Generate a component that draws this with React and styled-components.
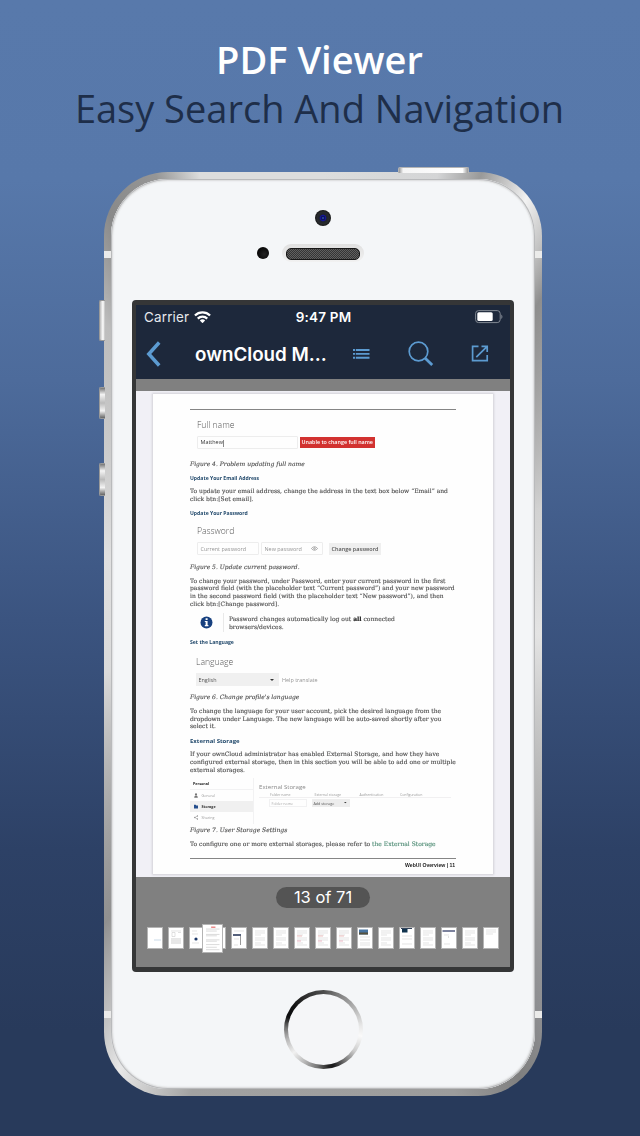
import React from "react";
import styled, { createGlobalStyle, css } from "styled-components";

const Global = createGlobalStyle`
  * { box-sizing: border-box; }
  body { margin: 0; }
`;

const sans = `"Open Sans", "Noto Sans", sans-serif`;
const serif = `"DejaVu Serif", "Liberation Serif", serif`;
const system = `Inter, "Liberation Sans", sans-serif`;

const Stage = styled.main`
  width: 640px;
  height: 1136px;
  overflow: hidden;
  padding-top: 35px;
  background: linear-gradient(180deg, #5879ab 0, #5778aa 180px, #4d6b9b 380px, #3b5480 620px, #2d4166 850px, #283a5b 1030px, #283a5b 100%);
  font-family: ${sans};
`;
const Heading = styled.header`
  height: 137px;
  padding-right: 1px;
  text-align: center;
  white-space: nowrap;
`;
const Title = styled.h1`
  margin: 0;
  font-size: 38px;
  line-height: 49px;
  font-weight: 600;
  color: #fff;
`;
const Subtitle = styled.p`
  margin: 0;
  font-size: 38px;
  line-height: 49px;
  color: #1e2e49;
`;

/* Device */
const Phone = styled.section`
  position: relative;
  width: 438px;
  height: 924px;
  margin-left: 104px;
  padding: 7px;
  border-radius: 64px;
  background: conic-gradient(from 0deg, #dcdddd 0deg, #d4d5d6 14deg, #999 19deg, #f2f2f2 25deg, #c4c4c4 29deg, #8e8e8e 33deg, #d2d2d2 60deg, #e4e4e4 90deg, #b0b0b0 130deg, #8e8f92 150deg, #7f7f7f 156deg, #9c9c9c 164deg, #a2a2a2 196deg, #e8e8e8 205deg, #c4c4c4 209deg, #909090 217deg, #dadada 260deg, #e0e0e0 290deg, #bdbdbd 325deg, #898989 333deg, #969696 340deg, #dcdddd 345deg, #dcdddd 360deg);
`;
const SideButton = styled.i`
  position: absolute;
  left: -5px;
  top: ${(p) => p.$top}px;
  width: 6px;
  height: ${(p) => p.$h}px;
  border: 1px solid #999;
  border-right: 0;
  border-radius: 2px 0 0 2px;
  background: ${(p) => p.$round
    ? "linear-gradient(180deg, #777, #f4f4f4 22%, #bbb 50%, #f4f4f4 76%, #666)"
    : "linear-gradient(90deg, #bbb, #fff 60%, #bbb)"};
`;
const PowerButton = styled.i`
  position: absolute;
  left: 294px;
  top: -5px;
  width: 71px;
  height: 6px;
  border: 1px solid #b4b4b4;
  border-bottom: 0;
  border-radius: 2px 2px 0 0;
  background: linear-gradient(90deg, #999, #f5f5f5 6%, #fff 92%, #999);
`;
const Antenna = styled.i`
  position: absolute;
  ${(p) => p.$side}: 0;
  top: ${(p) => p.$top}px;
  width: 7px;
  height: 7px;
  background: #ebebea;
`;
const Face = styled.div`
  height: 910px;
  display: flex;
  flex-direction: column;
  align-items: center;
  border-radius: 57px;
  background: #f4f6f8;
  box-shadow: inset 0 0 0 1px #b9babc, inset 0 0 0 2px #e0e1e2, inset 0 0 2px 2px #dcdedf;
`;
const Camera = styled.div`
  width: 16px;
  height: 16px;
  margin-top: 31px;
  border-radius: 50%;
  background: radial-gradient(circle, #3a5cc0 0, #080c50 1.8px, #1515a0 2.6px, #20242c 3.8px, #292b2e 6px, #151617 8px);
`;
const EarRow = styled.div`
  align-self: flex-start;
  display: flex;
  align-items: center;
  gap: 13px;
  height: 18px;
  margin: 18px 0 38px 146px;
`;
const Proximity = styled.i`
  width: 12px;
  height: 12px;
  border-radius: 50%;
  background: radial-gradient(circle at 60% 60%, #242424, #070707 70%);
`;
const Speaker = styled.div`
  width: 82px;
  height: 18px;
  padding: 4px;
  border-radius: 9px;
  background: linear-gradient(#e0e0e0, #ececec 70%, #f1f1f1);
  &::before {
    content: "";
    display: block;
    height: 10px;
    border: 1px solid #171717;
    border-radius: 5px;
    background: repeating-conic-gradient(#353535 0 25%, #606060 0 50%) 0 0 / 2px 2px;
  }
`;
const Home = styled.div`
  width: 79px;
  height: 79px;
  margin-top: 18px;
  padding: 4px;
  border-radius: 50%;
  background: conic-gradient(#4c4c4c 0deg, #777 20deg, #aaa 50deg, #e9e9e9 85deg, #fafafa 100deg, #ccc 125deg, #777 145deg, #19191b 165deg, #222 172deg, #777 190deg, #bcbcbc 212deg, #f1f1f1 232deg, #b8b8b8 255deg, #777 272deg, #0d0d0f 290deg, #111 308deg, #333 335deg, #4c4c4c 360deg);
  &::before {
    content: "";
    display: block;
    height: 100%;
    border-radius: 50%;
    background: #f5f6f8;
  }
`;

/* App screen */
const Screen = styled.div`
  flex: none;
  width: 382px;
  height: 672px;
  display: flex;
  flex-direction: column;
  border: 4px solid #353637;
  border-top-width: 5px;
  border-bottom-width: 5px;
  border-radius: 4px;
  background: #808080;
  font-family: ${system};
`;
const StatusBar = styled.div`
  height: 24px;
  flex: none;
  display: grid;
  grid-template-columns: 1fr auto 1fr;
  align-items: center;
  padding: 0 7px 0 8px;
  background: #1d283b;
  color: #fff;
  font-size: 13.4px;
  letter-spacing: 0.2px;
`;
const Carrier = styled.div`
  display: flex;
  align-items: center;
  gap: 5px;
  color: #e6e9ed;
`;
const Clock = styled.b`
  font-weight: 600;
  font-size: 13.5px;
`;
const BatterySlot = styled.div`
  display: flex;
  justify-content: flex-end;
`;
const NavBar = styled.nav`
  height: 50px;
  flex: none;
  display: flex;
  align-items: center;
  padding-left: 10px;
  background: #1d283b;
  color: #5c9bd1;
  svg { display: block; flex: none; }
`;
const DocTitle = styled.h2`
  width: 133px;
  margin: 0 25px 0 34px;
  color: #fff;
  font-size: 18.8px;
  font-weight: 600;
  white-space: nowrap;
`;
const NavGap = styled.i`
  width: ${(p) => p.$w}px;
`;
const Viewer = styled.div`
  height: 486px;
  flex: none;
  margin-top: 12px;
  padding: 3px 17px 0;
  background: #f1f0f6;
`;
const Page = styled.article`
  height: 480px;
  padding: 15px 37px 0;
  background: #fff;
  box-shadow: 0 0 2px 1px #d3d2d8;
  color: #4b4b4b;
  font-family: ${serif};
  white-space: nowrap;
  will-change: opacity;
  opacity: 0.999;
`;
const Rule = styled.hr`
  height: 1px;
  margin: ${(p) => p.$mt || 0}px 0 0;
  border: 0;
  background: #858585;
`;
const Para = styled.p`
  margin: ${(p) => p.$mt}px 0 0;
  font-size: 6px;
  line-height: 7.7px;
  -webkit-text-stroke: 0.12px currentColor;
  b { color: #222; }
  ${(p) => p.$caption && css`font-style: italic;`}
`;
const Link = styled.span`color: #4c8a72;`;
const SubHead = styled.h3`
  margin: ${(p) => p.$mt}px 0 0;
  font: 700 ${(p) => (p.$large ? 6 : 5.12)}px/8px ${sans};
  color: #234a6c;
`;
const FormTitle = styled.h4`
  margin: ${(p) => p.$mt}px 0 0 ${(p) => p.$ml || 7}px;
  font: 300 8.6px/12px ${sans};
  color: #555;
`;
const FormRow = styled.div`
  height: 13px;
  display: flex;
  align-items: center;
  margin: 5px 0 0 ${(p) => p.$ml || 7}px;
  font: 400 5.45px/8px ${sans};
  color: #949494;
`;
const Field = styled.div`
  width: ${(p) => p.$w}px;
  height: 13px;
  display: flex;
  align-items: center;
  justify-content: space-between;
  margin-right: 2px;
  padding: 0 4px 0 2.5px;
  border: 1px solid #ededed;
  border-radius: 1px;
  ${(p) => p.$filled && css`color: #333;`}
`;
const Caret = styled.i`
  display: inline-block;
  width: 1px;
  height: 7px;
  vertical-align: middle;
  background: #888;
`;
const ErrorTag = styled.div`
  height: 11px;
  width: 75px;
  padding: 0 1.5px;
  background: #d23230;
  color: #fff;
  font-weight: 600;
  font-size: 5.4px;
  line-height: 11px;
`;
const GreyButton = styled.div`
  width: 52px;
  height: 12px;
  margin-left: 4px;
  background: #efefef;
  color: #555;
  font-weight: 600;
  font-size: 5.5px;
  line-height: 12px;
  text-align: center;
`;
const Select = styled.div`
  width: 83px;
  height: 13px;
  display: flex;
  align-items: center;
  justify-content: space-between;
  margin-right: 3px;
  padding: 0 5px 0 2.5px;
  background: #f0f0f0;
  color: #555;
`;
const Note = styled.aside`
  height: 19px;
  display: flex;
  align-items: center;
  margin-top: 5.6px;
`;
const NoteIcon = styled.div`
  width: 34px;
  height: 19px;
  padding: 3px 0 0 10px;
  border-right: 1px solid #e9e9e9;
  margin-right: 5px;
  svg { display: block; }
`;
const Figure = styled.div`
  height: 46px;
  display: flex;
  margin-top: 4.8px;
  font: 400 3.7px/5px ${sans};
  color: #999;
`;
const SideMenu = styled.div`
  width: 64px;
  border-right: 1px solid #f3f3f3;
`;
const MenuRow = styled.div`
  height: 11px;
  display: flex;
  align-items: center;
  gap: 3.5px;
  padding-left: 4px;
  ${(p) => p.$head && css`height: 12px; color: #222; font-weight: 700; border-bottom: 1px solid #f3f3f3; padding-left: 3px;`}
  ${(p) => p.$active && css`background: #f0f0f0; color: #333; font-weight: 700;`}
`;
const Storage = styled.div`
  flex: 1;
  padding: 4px 0 0 5px;
`;
const StorageTitle = styled.div`
  font-size: 6.1px;
  line-height: 9px;
  color: #888;
`;
const StorageHead = styled.div`
  display: grid;
  grid-template-columns: 44.5px 45px 40.5px 1fr;
  width: 192px;
  height: 7px;
  padding: 0.6px 0 0 11px;
  border-bottom: 1px solid #f1f1f1;
  font-size: 3.5px;
  color: #999;
`;
const StorageRow = styled.div`
  display: flex;
  gap: 5px;
  padding: 1px 0 0 10px;
`;
const MiniBox = styled.div`
  width: ${(p) => p.$w}px;
  height: 8px;
  display: flex;
  align-items: center;
  justify-content: space-between;
  padding: 0 3px 0 1.5px;
  ${(p) => (p.$grey ? css`background: #ededed; color: #555;` : css`border: 1px solid #f2f2f2; color: #aaa;`)}
`;
const Footer = styled.footer`
  margin-top: 2px;
  text-align: right;
  padding-right: 1px;
  font: 600 5.15px/8px "Liberation Sans", sans-serif;
  color: #222;
`;
const Counter = styled.div`
  flex: none;
  width: 94px;
  height: 21px;
  margin: 10px 0 0 140px;
  border-radius: 10.5px;
  background: #545454;
  color: #fff;
  font-size: 16.5px;
  line-height: 21px;
  text-align: center;
  white-space: nowrap;
`;
const Strip = styled.div`
  position: relative;
  display: flex;
  gap: 5px;
  margin: 19px 0 0 11px;
`;
const Thumb = styled.div`
  flex: none;
  width: 16px;
  height: 22px;
  border: 1px solid #b4b4b4;
  background: #fff;
  overflow: hidden;
  svg { display: block; }
  ${(p) => p.$current && css`
    position: absolute;
    left: 54.5px;
    top: -3.5px;
    width: 21.5px;
    height: 29px;
    border-width: 1.5px;
  `}
`;

const CaretDown = ({ size = 4 }) => (
  <svg width={size} height={size / 2} viewBox="0 0 4 2"><path d="M0 0h4L2 2z" fill="#333" /></svg>
);

const WifiIcon = () => (
  <svg width="17" height="12.5" viewBox="0 0 18 13" fill="none" stroke="#fff" strokeWidth="2.4">
    <path d="M1 4.7a11.4 11.4 0 0 1 16 0" />
    <path d="M4 7.9a7.1 7.1 0 0 1 10 0" />
    <path d="M9 12.8 6.2 10a4 4 0 0 1 5.6 0z" fill="#fff" stroke="none" />
  </svg>
);
const BatteryIcon = () => (
  <svg width="28" height="14" viewBox="0 0 28 14">
    <rect x=".6" y=".6" width="24.6" height="12" rx="3" fill="none" stroke="#828993" />
    <rect x="2.3" y="2.2" width="15.4" height="8.8" rx="1.5" fill="#fff" />
    <path d="M26.3 4.5v4.4c1.5-.8 1.5-3.6 0-4.4z" fill="#828993" />
  </svg>
);
const BackIcon = () => (
  <svg width="15" height="26" viewBox="0 0 15 26" fill="none" stroke="currentColor" strokeWidth="3.5">
    <path d="M13.2 1.5 2.8 13l10.4 11.5" />
  </svg>
);
const ListIcon = () => (
  <svg width="17" height="11" viewBox="0 0 17 11" stroke="currentColor" strokeWidth="1.9">
    <path d="M0 1h2M2.8 1h13.7M0 4.9h2M2.8 4.9h13.7M0 8.8h2M2.8 8.8h13.7" />
  </svg>
);
const SearchIcon = () => (
  <svg width="26" height="26" viewBox="0 0 26 26" fill="none" stroke="currentColor">
    <circle cx="10.5" cy="10.5" r="9.3" strokeWidth="1.7" />
    <path d="m17.2 17.2 7 6.8" strokeWidth="2.8" />
  </svg>
);
const OpenIcon = () => (
  <svg width="18" height="18" viewBox="0 0 18 18" fill="none" stroke="currentColor" strokeWidth="1.7">
    <path d="M7.5 1.3H1.6v14.4h14.6v-5.7M10.5 1.3h5.7v5.7M16.2 1.3 5.3 12.2" />
  </svg>
);
const InfoIcon = () => (
  <svg width="13" height="13" viewBox="0 0 13 13">
    <circle cx="6.5" cy="6.5" r="6" fill="#17407f" />
    <path d="M5.6 2.2h2v1.7h-2zM4.8 4.9h2.8v4.2h.8v1.2H4.8V9.1h.8v-3h-.8z" fill="#fff" />
  </svg>
);
const EyeIcon = () => (
  <svg width="7" height="5" viewBox="0 0 7 5" fill="none" stroke="#888" strokeWidth=".7">
    <path d="M.5 2.5c1.6-2.3 4.4-2.3 6 0-1.6 2.3-4.4 2.3-6 0z" /><circle cx="3.5" cy="2.5" r=".8" />
  </svg>
);
const PersonGlyph = () => (
  <svg width="4" height="5" viewBox="0 0 4 5" fill="#777"><circle cx="2" cy="1.4" r="1.1" /><path d="M.2 4.7c0-3 3.6-3 3.6 0z" /></svg>
);
const FolderGlyph = () => (
  <svg width="4" height="5" viewBox="0 0 4 5" fill="#244d8c"><path d="M0 .8h1.7l.5.7H4v2.9H0z" /></svg>
);
const ShareGlyph = () => (
  <svg width="4" height="5" viewBox="0 0 4 5" fill="#777" stroke="#777" strokeWidth=".4">
    <path d="M3.3 1 .8 2.5 3.3 4" fill="none" /><circle cx="3.3" cy="1" r=".4" /><circle cx=".8" cy="2.5" r=".4" /><circle cx="3.3" cy="4" r=".4" />
  </svg>
);

const ThumbArt = ({ kind }) => {
  const line = (y, w = 10, c = "#d9d9d9", x = 2) => (
    <path key={`${y}-${x}`} d={`M${x} ${y}h${w}`} stroke={c} strokeWidth=".7" />
  );
  const text = [3, 5, 7, 10, 12, 15, 17].map((y, i) => line(y, i % 3 === 2 ? 6 : 10));
  const art = {
    cover: line(12, 7, "#b6cce0", 6),
    form: <>{line(3)}<path d="M3 4.5h3v4H3zM9 4.5h3" fill="none" stroke="#ccc" strokeWidth=".6" />{[11, 13, 15].map((y) => line(y, 10, "#bbb"))}</>,
    dot: <>{line(3, 5)}{line(6, 6)}<circle cx="6" cy="11" r="1.6" fill="#1d3868" />{line(15, 7)}</>,
    blank: null,
    menu: <><path d="M1 7h8" stroke="#1d2d50" strokeWidth="1.5" /><path d="M8.5 8v9" stroke="#999" />{line(3)}{line(11, 5)}{line(17, 4)}</>,
    text,
    red: <>{text}{line(8, 5, "#e8a6a6", 2)}{line(13, 4, "#e79bb0", 2)}</>,
    current: <>{line(1.6, 3.2, "#e04848", 5.8)}{[3, 4.5, 7, 8, 11, 12, 14.5, 16.5, 18.3].map((y, i) => line(y, i % 2 ? 8 : 10, "#dadada"))}</>,
    photo: <><path d="M1 1.5h9v5H1z" fill="#47739f" /><path d="M1 4.5h9v2H1z" fill="#55513d" />{[9, 12, 15, 17].map((y) => line(y))}</>,
    dark: <><path d="M1 .5h11" stroke="#34445b" /><path d="M2 1h5.5v3.5H2z" fill="#11334e" />{[8, 11, 16].map((y) => line(y))}</>,
    bar: <><path d="M.5 3h12.5" stroke="#25305c" strokeWidth="1.2" />{line(7, 5)}{line(9, 1, "#aaa", 6)}{line(16, 6)}</>,
    half: <>{line(2)}{line(4)}{line(6, 7)}</>,
  };
  return <svg width="100%" height="100%" viewBox="0 0 14 20">{art[kind]}</svg>;
};

const thumbs = ["cover", "form", "dot", "blank", "menu", "text", "text", "red", "red", "red", "photo", "text", "dark", "text", "bar", "text", "half"];

const DocumentPage = () => (
  <Page>
    <Rule />
    <FormTitle $mt={9}>Full name</FormTitle>
    <FormRow>
      <Field $w={101} $filled><span>Matthew<Caret /></span></Field>
      <ErrorTag>Unable to change full name</ErrorTag>
    </FormRow>
    <Para $mt={10.7} $caption>Figure 4. Problem updating full name</Para>
    <SubHead $mt={7.2}>Update Your Email Address</SubHead>
    <Para $mt={4.8}>
      To update your email address, change the address in the text box below “Email” and<br />
      click btn:[Set email].
    </Para>
    <SubHead $mt={7.2}>Update Your Password</SubHead>
    <FormTitle $mt={7.5}>Password</FormTitle>
    <FormRow>
      <Field $w={62}>Current password</Field>
      <Field $w={62}>New password<EyeIcon /></Field>
      <GreyButton>Change password</GreyButton>
    </FormRow>
    <Para $mt={7.6} $caption>Figure 5. Update current password.</Para>
    <Para $mt={5.9}>
      To change your password, under Password, enter your current password in the first<br />
      password field (with the placeholder text “Current password”) and your new password<br />
      in the second password field (with the placeholder text “New password”), and then<br />
      click btn:[Change password].
    </Para>
    <Note>
      <NoteIcon><InfoIcon /></NoteIcon>
      <Para $mt={0}>
        Password changes automatically log out <b>all</b> connected<br />browsers/devices.
      </Para>
    </Note>
    <SubHead $mt={7.3}>Set the Language</SubHead>
    <FormTitle $mt={8.7} $ml={6}>Language</FormTitle>
    <FormRow $ml={6}>
      <Select>English<CaretDown /></Select>
      Help translate
    </FormRow>
    <Para $mt={7} $caption>Figure 6. Change profile's language</Para>
    <Para $mt={6.1}>
      To change the language for your user account, pick the desired language from the<br />
      dropdown under Language. The new language will be auto-saved shortly after you<br />
      select it.
    </Para>
    <SubHead $mt={7.2} $large>External Storage</SubHead>
    <Para $mt={5}>
      If your ownCloud administrator has enabled External Storage, and how they have<br />
      configured external storage, then in this section you will be able to add one or multiple<br />
      external storages.
    </Para>
    <Figure>
      <SideMenu>
        <MenuRow $head>Personal</MenuRow>
        <MenuRow><PersonGlyph />General</MenuRow>
        <MenuRow $active><FolderGlyph />Storage</MenuRow>
        <MenuRow><ShareGlyph />Sharing</MenuRow>
      </SideMenu>
      <Storage>
        <StorageTitle>External Storage</StorageTitle>
        <StorageHead>
          <span>Folder name</span><span>External storage</span><span>Authentication</span><span>Configuration</span>
        </StorageHead>
        <StorageRow>
          <MiniBox $w={38}>Folder name</MiniBox>
          <MiniBox $w={38} $grey>Add storage<CaretDown size={2.6} /></MiniBox>
        </StorageRow>
      </Storage>
    </Figure>
    <Para $mt={1.5} $caption>Figure 7. User Storage Settings</Para>
    <Para $mt={6.3}>
      To configure one or more external storages, please refer to <Link>the External Storage</Link>
    </Para>
    <Rule $mt={10.4} />
    <Footer>WebUI Overview | 11</Footer>
  </Page>
);

export default function App() {
  return (
    <Stage>
      <Global />
      <Heading>
        <Title>PDF Viewer</Title>
        <Subtitle>Easy Search And Navigation</Subtitle>
      </Heading>
      <Phone>
        <PowerButton />
        <SideButton $top={128} $h={41} />
        <SideButton $top={215} $h={32} $round />
        <SideButton $top={291} $h={33} $round />
        <Antenna $side="left" $top={79} />
        <Antenna $side="right" $top={79} />
        <Antenna $side="left" $top={839} />
        <Antenna $side="right" $top={839} />
        <Face>
          <Camera />
          <EarRow><Proximity /><Speaker /></EarRow>
          <Screen>
            <StatusBar>
              <Carrier>Carrier<WifiIcon /></Carrier>
              <Clock>9:47 PM</Clock>
              <BatterySlot><BatteryIcon /></BatterySlot>
            </StatusBar>
            <NavBar>
              <BackIcon />
              <DocTitle>ownCloud M...</DocTitle>
              <ListIcon />
              <NavGap $w={38} />
              <SearchIcon />
              <NavGap $w={37} />
              <OpenIcon />
            </NavBar>
            <Viewer><DocumentPage /></Viewer>
            <Counter>13 of 71</Counter>
            <Strip>
              {thumbs.map((kind, i) => <Thumb key={i}><ThumbArt kind={kind} /></Thumb>)}
              <Thumb $current><ThumbArt kind="current" /></Thumb>
            </Strip>
          </Screen>
          <Home />
        </Face>
      </Phone>
    </Stage>
  );
}
